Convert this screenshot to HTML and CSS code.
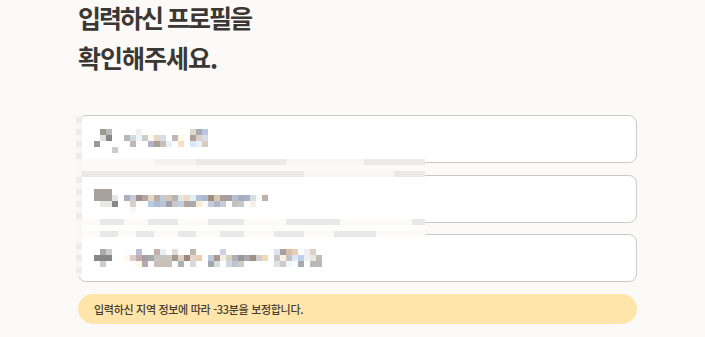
FILE: index.html
```html
<!DOCTYPE html>
<html lang="ko">
<head>
<meta charset="utf-8">
<link rel="stylesheet" href="styles.css">
</head>
<body>
<main class="page">
  <h1 class="title"><span class="title-tight">입력하신 프로필을</span><br>확인해주세요.</h1>
  <section class="cards">
    <div class="card"></div>
    <div class="card"></div>
    <div class="card"></div>
    <svg class="mosaic" viewBox="76 115 349 162" width="349" height="162" aria-hidden="true">
      <rect x="76" y="115" width="6" height="162" fill="#f8f7f6"/>
      <rect x="76" y="117" width="6" height="6" fill="#ececec"/>
      <rect x="76" y="129" width="6" height="6" fill="#ececec"/>
      <rect x="76" y="141" width="6" height="6" fill="#ececec"/>
      <rect x="76" y="153" width="6" height="6" fill="#ececec"/>
      <rect x="76" y="177" width="6" height="6" fill="#ededed"/>
      <rect x="76" y="189" width="6" height="6" fill="#ececec"/>
      <rect x="76" y="201" width="6" height="6" fill="#ededed"/>
      <rect x="76" y="213" width="6" height="6" fill="#ececec"/>
      <rect x="76" y="243" width="6" height="6" fill="#ededed"/>
      <rect x="76" y="255" width="6" height="6" fill="#ececec"/>
      <rect x="76" y="267" width="6" height="6" fill="#ededed"/>
      <!-- band 1 -->
      <rect x="82" y="159" width="343" height="18" fill="#fbfaf9"/>
      <rect x="154" y="159" width="42" height="6" fill="#f3f3f2"/>
      <rect x="196" y="159" width="90" height="6" fill="#eaeaea"/>
      <rect x="286" y="159" width="78" height="6" fill="#f7f7f6"/>
      <rect x="364" y="159" width="61" height="6" fill="#ebebeb"/>
      <rect x="82" y="171" width="222" height="6" fill="#e9e9e9"/>
      <rect x="304" y="171" width="90" height="6" fill="#f7f7f6"/>
      <rect x="394" y="171" width="31" height="6" fill="#e9e9e9"/>
      <!-- band 2 -->
      <rect x="82" y="219" width="343" height="18" fill="#fbfaf9"/>
      <rect x="82" y="225" width="343" height="6" fill="#fdfdfc"/>
      <rect x="100" y="219" width="24" height="6" fill="#e9e9e9"/>
      <rect x="148" y="219" width="30" height="6" fill="#e9e9e9"/>
      <rect x="208" y="219" width="36" height="6" fill="#e9e9e9"/>
      <rect x="286" y="219" width="54" height="6" fill="#e9e9e9"/>
      <rect x="412" y="219" width="13" height="6" fill="#e9e9e9"/>
      <rect x="100" y="231" width="18" height="6" fill="#e8e8e8"/>
      <rect x="136" y="231" width="18" height="6" fill="#e8e8e8"/>
      <rect x="178" y="231" width="18" height="6" fill="#e8e8e8"/>
      <rect x="220" y="231" width="24" height="6" fill="#e8e8e8"/>
      <rect x="274" y="231" width="30" height="6" fill="#e8e8e8"/>
      <rect x="334" y="231" width="42" height="6" fill="#e8e8e8"/>
      <!-- row 1 -->
      <rect x="100" y="129" width="6" height="6" fill="#9f9994"/>
      <rect x="106" y="129" width="6" height="6" fill="#b9b9b9"/>
      <rect x="136" y="129" width="6" height="6" fill="#f4f0f2"/>
      <rect x="190" y="129" width="6" height="6" fill="#e0d8d0"/>
      <rect x="196" y="129" width="6" height="6" fill="#a8aab0"/>
      <rect x="202" y="129" width="6" height="6" fill="#b8c8e0"/>
      <rect x="100" y="135" width="6" height="6" fill="#dedede"/>
      <rect x="106" y="135" width="6" height="6" fill="#8a8580"/>
      <rect x="124" y="135" width="6" height="6" fill="#b8b8b8"/>
      <rect x="130" y="135" width="6" height="6" fill="#d0d8e0"/>
      <rect x="136" y="135" width="6" height="6" fill="#e8f8f8"/>
      <rect x="142" y="135" width="6" height="6" fill="#cccccc"/>
      <rect x="148" y="135" width="6" height="6" fill="#fdf8e8"/>
      <rect x="154" y="135" width="6" height="6" fill="#e8d8c8"/>
      <rect x="160" y="135" width="6" height="6" fill="#d8dce8"/>
      <rect x="172" y="135" width="6" height="6" fill="#bbbbbb"/>
      <rect x="178" y="135" width="6" height="6" fill="#fffbe0"/>
      <rect x="190" y="135" width="6" height="6" fill="#b0a098"/>
      <rect x="196" y="135" width="6" height="6" fill="#d8d0c8"/>
      <rect x="202" y="135" width="6" height="6" fill="#d8dce8"/>
      <rect x="94" y="141" width="6" height="6" fill="#999999"/>
      <rect x="130" y="141" width="6" height="6" fill="#c0b8b8"/>
      <rect x="148" y="141" width="6" height="6" fill="#b8b0c8"/>
      <rect x="154" y="141" width="6" height="6" fill="#a8a098"/>
      <rect x="160" y="141" width="6" height="6" fill="#c8c0b8"/>
      <rect x="166" y="141" width="6" height="6" fill="#e8f0f8"/>
      <rect x="178" y="141" width="6" height="6" fill="#f8e0c8"/>
      <rect x="190" y="141" width="6" height="6" fill="#d8e8f8"/>
      <rect x="196" y="141" width="6" height="6" fill="#e8f0f8"/>
      <rect x="202" y="141" width="6" height="6" fill="#d8ccc0"/>
      <rect x="112" y="147" width="6" height="6" fill="#cccccc"/>
      <!-- row 2 -->
      <rect x="94" y="189" width="18" height="12" fill="#a8a19d"/>
      <rect x="112" y="195" width="6" height="6" fill="#e6e6e6"/>
      <rect x="124" y="195" width="6" height="6" fill="#aeaebf"/>
      <rect x="130" y="195" width="6" height="6" fill="#c6cdd9"/>
      <rect x="136" y="195" width="6" height="6" fill="#9e8f8f"/>
      <rect x="142" y="195" width="6" height="6" fill="#b5a5a5"/>
      <rect x="148" y="195" width="6" height="6" fill="#e6d6c6"/>
      <rect x="154" y="195" width="6" height="6" fill="#b5aca4"/>
      <rect x="160" y="195" width="6" height="6" fill="#bfcbd6"/>
      <rect x="166" y="195" width="6" height="6" fill="#d6c6b6"/>
      <rect x="172" y="195" width="6" height="6" fill="#b5b5b5"/>
      <rect x="178" y="195" width="6" height="6" fill="#dfe8df"/>
      <rect x="184" y="195" width="6" height="6" fill="#efdac6"/>
      <rect x="190" y="195" width="6" height="6" fill="#e0f0f8"/>
      <rect x="196" y="195" width="6" height="6" fill="#b5bfd6"/>
      <rect x="202" y="195" width="6" height="6" fill="#adb8d0"/>
      <rect x="208" y="195" width="6" height="6" fill="#9e8e7e"/>
      <rect x="214" y="195" width="6" height="6" fill="#d6c6b6"/>
      <rect x="220" y="195" width="6" height="6" fill="#ad9e96"/>
      <rect x="226" y="195" width="6" height="6" fill="#a59fa5"/>
      <rect x="232" y="195" width="6" height="6" fill="#b5bfcf"/>
      <rect x="238" y="195" width="6" height="6" fill="#a5adc0"/>
      <rect x="244" y="195" width="6" height="6" fill="#a8b0c8"/>
      <rect x="250" y="195" width="6" height="6" fill="#d8e0e0"/>
      <rect x="256" y="195" width="6" height="6" fill="#f8fbfb"/>
      <rect x="262" y="195" width="6" height="6" fill="#c0b0a8"/>
      <rect x="100" y="201" width="12" height="6" fill="#e8e8e8"/>
      <rect x="112" y="201" width="6" height="6" fill="#888888"/>
      <rect x="130" y="201" width="6" height="6" fill="#d8d0c8"/>
      <rect x="148" y="201" width="6" height="6" fill="#b8cce0"/>
      <rect x="154" y="201" width="6" height="6" fill="#b0bcd0"/>
      <rect x="160" y="201" width="6" height="6" fill="#b8c4d8"/>
      <rect x="166" y="201" width="6" height="6" fill="#a0a0a8"/>
      <rect x="172" y="201" width="6" height="6" fill="#c8c8c8"/>
      <rect x="178" y="201" width="6" height="6" fill="#c0d0e0"/>
      <rect x="184" y="201" width="6" height="6" fill="#b0a8a0"/>
      <rect x="190" y="201" width="6" height="6" fill="#a8a8b0"/>
      <rect x="196" y="201" width="6" height="6" fill="#fde8d0"/>
      <rect x="202" y="201" width="6" height="6" fill="#f8f8f8"/>
      <rect x="208" y="201" width="6" height="6" fill="#c8c8d8"/>
      <rect x="214" y="201" width="6" height="6" fill="#b0b8c8"/>
      <rect x="220" y="201" width="6" height="6" fill="#c8ccd8"/>
      <rect x="232" y="201" width="6" height="6" fill="#c8c0c0"/>
      <rect x="238" y="201" width="6" height="6" fill="#c8c8c8"/>
      <rect x="250" y="201" width="6" height="6" fill="#f8f0e8"/>
      <rect x="130" y="207" width="6" height="6" fill="#f8f8fc"/>
      <!-- row 3 -->
      <rect x="100" y="249" width="6" height="6" fill="#aaaaaa"/>
      <rect x="106" y="249" width="6" height="6" fill="#cccccc"/>
      <rect x="136" y="249" width="6" height="6" fill="#b8c0d8"/>
      <rect x="154" y="249" width="6" height="6" fill="#c0b0a8"/>
      <rect x="160" y="249" width="6" height="6" fill="#e8eef5"/>
      <rect x="172" y="249" width="6" height="6" fill="#dddddd"/>
      <rect x="190" y="249" width="6" height="6" fill="#c0b8b0"/>
      <rect x="220" y="249" width="6" height="6" fill="#d0d0e0"/>
      <rect x="274" y="249" width="6" height="6" fill="#dce4f0"/>
      <rect x="280" y="249" width="6" height="6" fill="#a8a0a0"/>
      <rect x="286" y="249" width="6" height="6" fill="#d8c0a8"/>
      <rect x="292" y="249" width="6" height="6" fill="#e8d0b8"/>
      <rect x="304" y="249" width="6" height="6" fill="#eeeeee"/>
      <rect x="310" y="249" width="6" height="6" fill="#ddd0c8"/>
      <rect x="94" y="255" width="18" height="6" fill="#878787"/>
      <rect x="124" y="255" width="6" height="6" fill="#fdf8e8"/>
      <rect x="130" y="255" width="6" height="6" fill="#d8d0c8"/>
      <rect x="136" y="255" width="6" height="6" fill="#c8a8a8"/>
      <rect x="142" y="255" width="6" height="6" fill="#a0a0a8"/>
      <rect x="148" y="255" width="6" height="6" fill="#a8a8a8"/>
      <rect x="154" y="255" width="18" height="6" fill="#c8c4c0"/>
      <rect x="172" y="255" width="6" height="6" fill="#a89888"/>
      <rect x="178" y="255" width="6" height="6" fill="#d8d0c8"/>
      <rect x="184" y="255" width="6" height="6" fill="#a08878"/>
      <rect x="190" y="255" width="6" height="6" fill="#e0d8d0"/>
      <rect x="196" y="255" width="6" height="6" fill="#e8d0b0"/>
      <rect x="208" y="255" width="6" height="6" fill="#c0c8d8"/>
      <rect x="214" y="255" width="6" height="6" fill="#a89890"/>
      <rect x="220" y="255" width="6" height="6" fill="#f0f0e8"/>
      <rect x="226" y="255" width="6" height="6" fill="#d8d0c0"/>
      <rect x="232" y="255" width="6" height="6" fill="#b0b0b8"/>
      <rect x="238" y="255" width="6" height="6" fill="#989898"/>
      <rect x="244" y="255" width="6" height="6" fill="#a8a8b0"/>
      <rect x="250" y="255" width="6" height="6" fill="#a09080"/>
      <rect x="256" y="255" width="6" height="6" fill="#d0ccd0"/>
      <rect x="262" y="255" width="6" height="6" fill="#f0d8b8"/>
      <rect x="274" y="255" width="6" height="6" fill="#c8c8c8"/>
      <rect x="280" y="255" width="6" height="6" fill="#fdf0e0"/>
      <rect x="286" y="255" width="6" height="6" fill="#c8c0c8"/>
      <rect x="292" y="255" width="6" height="6" fill="#d8e8f8"/>
      <rect x="298" y="255" width="6" height="6" fill="#c0d0e8"/>
      <rect x="304" y="255" width="6" height="6" fill="#f0f0f0"/>
      <rect x="310" y="255" width="6" height="6" fill="#e8e8e0"/>
      <rect x="316" y="255" width="6" height="6" fill="#c0bcb8"/>
      <rect x="100" y="261" width="6" height="6" fill="#cccccc"/>
      <rect x="136" y="261" width="6" height="6" fill="#fdf8e8"/>
      <rect x="142" y="261" width="6" height="6" fill="#b8a8b0"/>
      <rect x="154" y="261" width="18" height="6" fill="#c8c0b8"/>
      <rect x="178" y="261" width="6" height="6" fill="#a8b0b8"/>
      <rect x="190" y="261" width="6" height="6" fill="#d8d8e0"/>
      <rect x="208" y="261" width="6" height="6" fill="#a0a8b0"/>
      <rect x="214" y="261" width="6" height="6" fill="#d8dde0"/>
      <rect x="226" y="261" width="6" height="6" fill="#d0d8e0"/>
      <rect x="232" y="261" width="6" height="6" fill="#c0c4d0"/>
      <rect x="238" y="261" width="6" height="6" fill="#cccccc"/>
      <rect x="274" y="261" width="6" height="6" fill="#e0e0e0"/>
      <rect x="280" y="261" width="6" height="6" fill="#cccccc"/>
      <rect x="286" y="261" width="6" height="6" fill="#f0f8fc"/>
      <rect x="298" y="261" width="6" height="6" fill="#a8a8b0"/>
      <rect x="310" y="261" width="12" height="6" fill="#b8b8b8"/>
    </svg>
  </section>
  <p class="notice">입력하신 지역 정보에 따라 -33분을 보정합니다.</p>
</main>
</body>
</html>
```

FILE: styles.css
```css
html, body {
  margin: 0;
  padding: 0;
  background: #fbfaf8;
}

body {
  font-family: "Noto Sans CJK KR", "Noto Sans", sans-serif;
  color: #3b3834;
}

.page {
  width: 559px;
  margin-left: 78px;
  padding-top: 0;
}

.title {
  margin: -3px 0 0;
  font-size: 25px;
  line-height: 40px;
  font-weight: 700;
  letter-spacing: -1px;
  color: #3b3834;
}

.title-tight {
  letter-spacing: -2px;
}

.cards {
  position: relative;
  margin-top: 38px;
  display: flex;
  flex-direction: column;
  gap: 11.5px;
}

.card {
  height: 46px;
  background: #ffffff;
  border: 1px solid #c9c9c9;
  border-radius: 8px;
}

.mosaic {
  position: absolute;
  left: -2px;
  top: 0;
  display: block;
}

.notice {
  margin: 12px 0 0;
  height: 30px;
  padding-left: 16px;
  border-radius: 15px;
  background: #ffe5a9;
  font-size: 11px;
  font-weight: 500;
  line-height: 30px;
  letter-spacing: -0.3px;
  color: #463e33;
}
```
